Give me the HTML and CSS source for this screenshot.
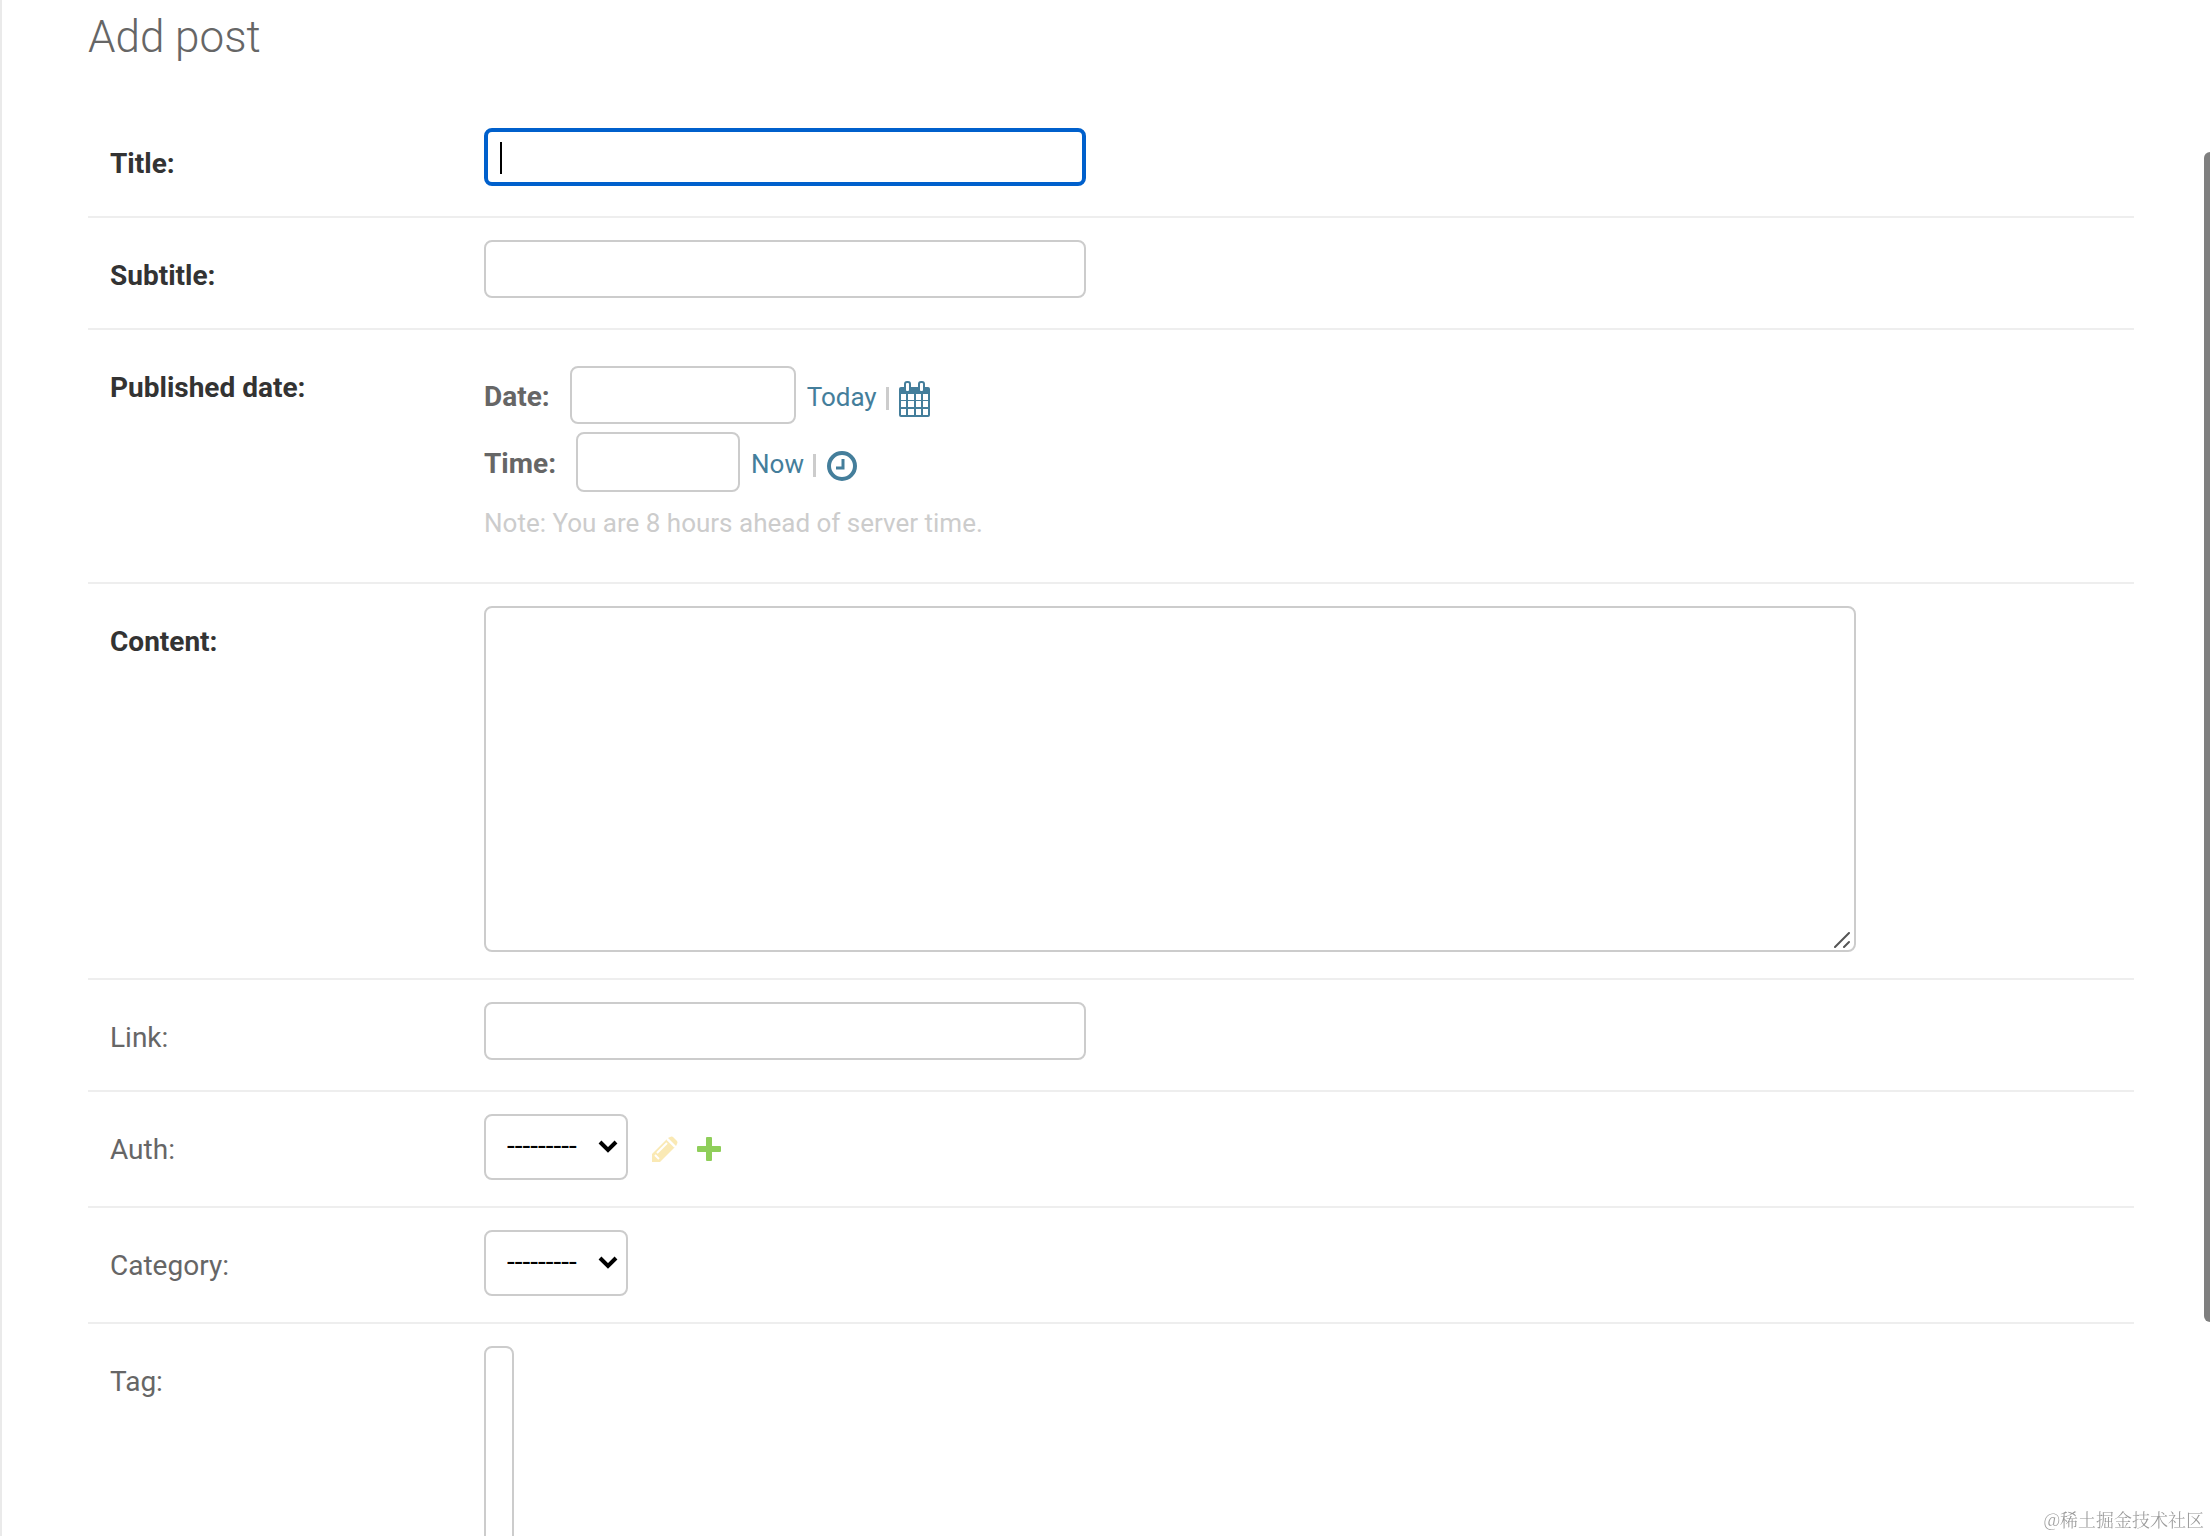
FILE: index.html
```html
<!DOCTYPE html>
<html lang="en">
<head>
    <meta charset="UTF-8">
    <meta name="viewport" content="width=device-width, initial-scale=1.0">
    <title>Add post</title>
    <link rel="stylesheet" href="styles.css">
</head>
<body>
    <main class="content">
        <h1>Add post</h1>
        <form>
            <div class="form-row">
                <label class="required" for="id_title">Title:</label>
                <div class="field">
                    <input type="text" class="text-field focused" id="id_title" autofocus>
                    <span class="caret"></span>
                </div>
            </div>
            <div class="form-row">
                <label class="required" for="id_subtitle">Subtitle:</label>
                <div class="field">
                    <input type="text" class="text-field" id="id_subtitle">
                </div>
            </div>
            <div class="form-row">
                <label class="required" for="id_date">Published date:</label>
                <div class="field datetime">
                    <div class="datetime-line">
                        <label for="id_date">Date:</label>
                        <input type="text" class="date-field" id="id_date">
                        <a href="#">Today</a>
                        <span class="separator"></span>
                        <a href="#" class="icon-link" aria-label="Choose a date">
                            <svg width="32" height="36" viewBox="0 0 32 36">
                                <rect x="0" y="6" width="31" height="30" rx="2" fill="#447e9b"/>
                                <path d="M2 13h5v6H2zM9 13h6v6H9zM17 13h5v6h-5zM24 13h5v6h-5zM2 20h5v6H2zM9 20h6v6H9zM17 20h5v6h-5zM24 20h5v6h-5zM2 28h5v6H2zM9 28h6v6H9zM17 28h5v6h-5zM24 28h5v6h-5z" fill="#fff"/>
                                <rect x="6" y="1" width="5" height="10" rx="2" fill="#fff" stroke="#447e9b" stroke-width="2"/>
                                <rect x="20" y="1" width="5" height="10" rx="2" fill="#fff" stroke="#447e9b" stroke-width="2"/>
                            </svg>
                        </a>
                    </div>
                    <div class="datetime-line">
                        <label for="id_time">Time:</label>
                        <input type="text" class="time-field" id="id_time">
                        <a href="#">Now</a>
                        <span class="separator"></span>
                        <a href="#" class="icon-link" aria-label="Choose a time">
                            <svg width="32" height="30" viewBox="0 0 32 30" fill="none" stroke="#447e9b">
                                <circle cx="16" cy="15" r="13" stroke-width="4"/>
                                <path d="M17 8v9h-7" stroke-width="3"/>
                            </svg>
                        </a>
                    </div>
                    <p class="timezone-note">Note: You are 8 hours ahead of server time.</p>
                </div>
            </div>
            <div class="form-row">
                <label class="required" for="id_content">Content:</label>
                <div class="field textarea-field">
                    <textarea id="id_content"></textarea>
                    <svg class="resizer" width="16" height="16" viewBox="0 0 16 16" stroke="#555" stroke-width="2" stroke-linecap="round">
                        <path d="M1 15L15 1M10 15L15 10"/>
                    </svg>
                </div>
            </div>
            <div class="form-row">
                <label for="id_link">Link:</label>
                <div class="field">
                    <input type="text" class="text-field" id="id_link">
                </div>
            </div>
            <div class="form-row">
                <label for="id_auth">Auth:</label>
                <div class="field related">
                    <div class="select">
                        <select id="id_auth">
                            <option>---------</option>
                        </select>
                        <svg class="arrow" width="20" height="14" viewBox="0 0 20 14" fill="none" stroke="#000" stroke-width="4">
                            <path d="M2 2l8 8 8-8"/>
                        </svg>
                    </div>
                    <a href="#" class="change-link" aria-label="Change selected auth">
                        <svg width="26" height="26" viewBox="0 0 26 26" fill="#efb80b">
                            <path d="M0 18L15 3l8 8L8 26H0z"/>
                            <path d="M16 2l2-1q2-1 3 0l4 4q1 1 0 3l-1 2z"/>
                            <path d="M5 17L15 7M3 19l4 4M15 3l8 8" stroke="#fff" stroke-width="2"/>
                        </svg>
                    </a>
                    <a href="#" class="add-link" aria-label="Add another auth">
                        <svg width="24" height="24" viewBox="0 0 24 24" fill="#8fce5a">
                            <path d="M10 0h4q1 0 1 1v8h8q1 0 1 1v4q0 1-1 1h-8v8q0 1-1 1h-4q-1 0-1-1v-8H1q-1 0-1-1v-4q0-1 1-1h8V1q0-1 1-1z"/>
                        </svg>
                    </a>
                </div>
            </div>
            <div class="form-row">
                <label for="id_category">Category:</label>
                <div class="field related">
                    <div class="select">
                        <select id="id_category">
                            <option>---------</option>
                        </select>
                        <svg class="arrow" width="20" height="14" viewBox="0 0 20 14" fill="none" stroke="#000" stroke-width="4">
                            <path d="M2 2l8 8 8-8"/>
                        </svg>
                    </div>
                </div>
            </div>
            <div class="form-row">
                <label for="id_tag">Tag:</label>
                <div class="field">
                    <select id="id_tag" class="tag-field" multiple></select>
                </div>
            </div>
        </form>
    </main>
    <div class="scrollbar"></div>
    <div class="watermark">@稀土掘金技术社区</div>
</body>
</html>
```
FILE: styles.css
```css
* {
    box-sizing: border-box;
}
body {
    margin: 0;
    height: 100vh;
    overflow: hidden;
    font-family: Roboto, "Noto Sans CJK SC", sans-serif;
    font-size: 28px;
    line-height: 34px;
    color: #666;
    background: #fff;
}
.content {
    min-height: 100vh;
    padding: 10px 76px 0 86px;
    border-left: 2px solid #eaeaea;
}
h1 {
    margin: 0 0 42px;
    font-size: 44px;
    font-weight: 300;
    line-height: 54px;
    color: #666;
}
.form-row {
    display: flex;
    align-items: flex-start;
    padding: 22px 22px 26px;
    border-bottom: 2px solid #eee;
}
.form-row > label {
    flex: 0 0 374px;
    padding-top: 19px;
}
label.required {
    font-weight: bold;
    color: #333;
}
.field {
    flex: 1;
    position: relative;
}
input,
textarea,
select {
    display: block;
    border: 2px solid #ccc;
    border-radius: 8px;
    background: #fff;
    font: inherit;
    color: #000;
    outline: none;
}
input {
    height: 58px;
    padding: 10px 12px;
}
.text-field {
    width: 602px;
    margin-bottom: 4px;
}
.text-field.focused {
    border: 4px solid #0060cc;
    caret-color: transparent;
}
.caret {
    position: absolute;
    left: 16px;
    top: 14px;
    width: 2px;
    height: 32px;
    background: #000;
}
.datetime {
    padding: 14px 0 8px;
}
.datetime-line {
    display: flex;
    align-items: center;
    margin-bottom: 8px;
}
.datetime-line label {
    padding-top: 4px;
    font-weight: bold;
}
.datetime-line a {
    padding-top: 4px;
    font-size: 26px;
    color: #447e9b;
    text-decoration: none;
}
.date-field {
    width: 226px;
    margin: 0 11px 0 20px;
}
.time-field {
    width: 164px;
    height: 60px;
    margin: 0 11px 0 20px;
}
.separator {
    width: 3px;
    height: 23px;
    margin: 6px 10px 0 9px;
    background: #ccc;
}
.datetime-line .icon-link {
    padding-top: 8px;
}
.icon-link svg {
    display: block;
}
.timezone-note {
    margin: 0;
    padding: 6px 0 8px;
    font-size: 26px;
    color: #ccc;
}
.textarea-field {
    flex: 0 1 1372px;
}
textarea {
    width: 100%;
    height: 346px;
    padding: 10px 12px;
    resize: none;
}
.resizer {
    position: absolute;
    right: 6px;
    bottom: 4px;
}
.related {
    display: flex;
    align-items: center;
}
.select {
    position: relative;
}
.select select {
    appearance: none;
    width: 144px;
    height: 66px;
    padding: 0 20px 2px 21px;
}
.arrow {
    position: absolute;
    right: 10px;
    top: 26px;
    pointer-events: none;
}
.related a {
    padding-top: 4px;
}
.related a svg {
    display: block;
}
.change-link {
    margin-left: 24px;
    opacity: 0.3;
}
.add-link {
    margin-left: 19px;
}
.tag-field {
    width: 30px;
    height: 300px;
}
.scrollbar {
    position: fixed;
    top: 152px;
    right: 0;
    bottom: 214px;
    width: 6px;
    border-radius: 6px 0 0 6px;
    background: #7f7f7f;
}
.watermark {
    position: fixed;
    right: 6px;
    bottom: 4px;
    font-family: "Noto Serif CJK SC", "Noto Sans CJK SC", sans-serif;
    font-size: 18px;
    font-weight: 300;
    line-height: 26px;
    color: #999;
}
```
